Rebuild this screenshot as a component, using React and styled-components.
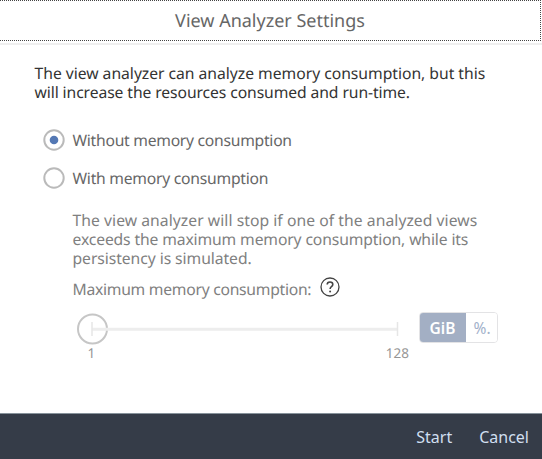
import React, { useState } from "react";
import styled, { createGlobalStyle } from "styled-components";

const GlobalStyle = createGlobalStyle`
  * { box-sizing: border-box; }
  body { margin: 0; background: #fff; }
`;

const Dialog = styled.div`
  display: flex;
  flex-direction: column;
  width: 542px;
  height: 459px;
  overflow: hidden;
  background: #fff;
  color: #333;
  font-family: "Noto Sans", "Open Sans", sans-serif;
  font-size: 15.7px;
  line-height: 19px;
  text-rendering: geometricPrecision;
`;

const Header = styled.header`
  height: 45px;
  flex: none;
  border-bottom: 2px solid #efefef;
`;

const TitleBar = styled.div`
  display: flex;
  align-items: center;
  justify-content: center;
  width: 541px;
  height: 41px;
  padding-top: 1px;
  border: 1px dotted #444;
  border-left: 0;
`;

const Title = styled.h1`
  margin: 0;
  font-size: 18px;
  line-height: 24px;
  font-weight: 400;
  color: #666;
`;

const Content = styled.main`
  flex: 1;
  padding: 19px 0 0 34.5px;
`;

const Line = styled.span`
  display: block;
  width: max-content;
  white-space: nowrap;
  letter-spacing: ${(p) => p.$spacing || 0}px;
`;

const Intro = styled.p`
  margin: 0;
  color: #333;
`;

const Options = styled.div`
  display: flex;
  flex-direction: column;
  gap: 16px;
  margin: 27px 0 0 8px;
`;

const Option = styled.label`
  display: flex;
  align-items: center;
  gap: 8px;
  height: 22px;
  color: #666;
`;

const Radio = styled.svg`
  width: 22px;
  height: 22px;
`;

const Details = styled.section`
  margin: 22px 0 0 38px;
  color: #808080;
`;

const Description = styled.p`
  margin: 0;
`;

const LimitLabel = styled.div`
  display: flex;
  align-items: center;
  gap: 9px;
  height: 22px;
  margin-top: 10px;
`;

const HelpIcon = styled.svg`
  width: 20px;
  height: 20px;
  margin-top: -4px;
`;

const Controls = styled.div`
  display: flex;
  height: 70px;
  margin: 12px 0 0 4.5px;
`;

const Slider = styled.div`
  width: 336px;
`;

const Rail = styled.svg`
  display: block;
  width: 336px;
  height: 33px;
  overflow: visible;
`;

const Scale = styled.div`
  display: flex;
  justify-content: space-between;
  width: 332px;
  padding: 1px 0 0 10.5px;
  font-size: 13.5px;
  line-height: 14px;
  color: #959595;
`;

const Units = styled.div`
  display: flex;
  width: 79px;
  height: 31px;
  margin: 0 0 0 5.5px;
  border: 1px solid #e3e3e5;
  border-radius: 4px;
  overflow: hidden;
`;

const Unit = styled.button`
  flex: none;
  width: ${(p) => (p.$active ? 46 : 31)}px;
  height: 29px;
  padding: ${(p) => (p.$active ? 0 : "0 0 0 8px")};
  border: 0;
  overflow: hidden;
  text-align: ${(p) => (p.$active ? "center" : "left")};
  white-space: nowrap;
  font: ${(p) => (p.$active ? 600 : 400)} 15.5px/30px "Noto Sans", sans-serif;
  color: ${(p) => (p.$active ? "#fff" : "#a2b1ca")};
  background: ${(p) => (p.$active ? "#a3afc4" : "#fff")};
`;

const Footer = styled.footer`
  display: flex;
  align-items: center;
  justify-content: flex-end;
  gap: 27px;
  flex: none;
  height: 46px;
  padding: 1px 13px 0 0;
  border-top: 1px solid #87929b;
  background: #353c48;
`;

const Action = styled.button`
  padding: 0;
  border: 0;
  background: none;
  color: #d0dff0;
  font: 400 16px/22px "Noto Sans", sans-serif;
`;

const options = [
  { label: "Without memory consumption", spacing: -0.27 },
  { label: "With memory consumption", spacing: -0.25 },
];

export default function App() {
  const [selected, setSelected] = useState(0);
  return (
    <>
      <GlobalStyle />
      <Dialog>
        <Header>
          <TitleBar>
            <Title>View Analyzer Settings</Title>
          </TitleBar>
        </Header>
        <Content>
          <Intro>
            <Line $spacing={-0.02}>The view analyzer can analyze memory consumption, but this</Line>
            <Line $spacing={-0.09}>will increase the resources consumed and run-time.</Line>
          </Intro>
          <Options>
            {options.map(({ label, spacing }, i) => (
              <Option key={label} onClick={() => setSelected(i)}>
                <Radio viewBox="0 0 22 22" fill="none">
                  <circle cx="11" cy="11" r="9.7" stroke="#bababa" strokeWidth="2" />
                  {selected === i && <circle cx="11" cy="11" r="4.3" fill="#5478b4" />}
                </Radio>
                <Line $spacing={spacing}>{label}</Line>
              </Option>
            ))}
          </Options>
          <Details>
            <Description>
              <Line $spacing={0.05}>The view analyzer will stop if one of the analyzed views</Line>
              <Line $spacing={-0.13}>exceeds the maximum memory consumption, while its</Line>
              <Line $spacing={-0.06}>persistency is simulated.</Line>
            </Description>
            <LimitLabel>
              <Line $spacing={-0.27}>Maximum memory consumption:</Line>
              <HelpIcon viewBox="0 0 20 20" fill="none" stroke="#444">
                <circle cx="10" cy="10" r="9" strokeWidth="1.3" />
                <path d="M7.2 7.6C7.2 5.9 8.3 5 10 5s2.8 1 2.8 2.5c0 2.2-2.7 2.2-2.7 4.4" strokeWidth="1.6" />
                <circle cx="10.1" cy="14.6" r="1" fill="#444" stroke="none" />
              </HelpIcon>
            </LimitLabel>
            <Controls>
              <Slider>
                <Rail viewBox="0 0 336 33">
                  <circle cx="15.5" cy="17" r="14.5" fill="#fff" stroke="#c6c6c6" strokeWidth="2" />
                  <path d="M15 17.2H320.5" stroke="#ededed" strokeWidth="3" />
                  <path d="M15 10V24M320.5 10V24" stroke="#e6e6e6" strokeWidth="1.5" />
                </Rail>
                <Scale>
                  <span>1</span>
                  <span>128</span>
                </Scale>
              </Slider>
              <Units>
                <Unit $active>GiB</Unit>
                <Unit>%.</Unit>
              </Units>
            </Controls>
          </Details>
        </Content>
        <Footer>
          <Action>Start</Action>
          <Action>Cancel</Action>
        </Footer>
      </Dialog>
    </>
  );
}
